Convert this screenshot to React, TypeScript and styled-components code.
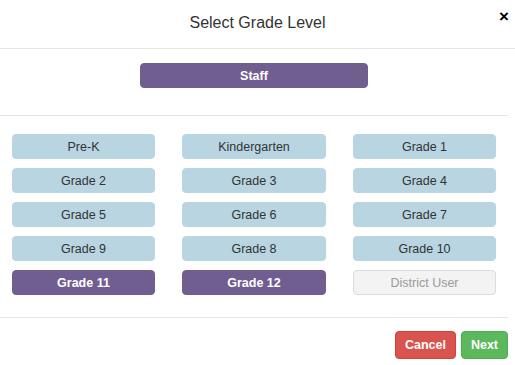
import React from "react";
import styled, { createGlobalStyle } from "styled-components";

const Global = createGlobalStyle`
  html, body { margin: 0; padding: 0; background: #fff; }
  body { font-family: "Liberation Sans", Arial, sans-serif; color: #333; }
  * { box-sizing: border-box; }
`;

const Modal = styled.div`
  width: 515px;
  height: 365px;
  background: #fff;
  display: flex;
  flex-direction: column;
`;

const Header = styled.div`
  position: relative;
  height: 49px;
  border-bottom: 1px solid #e5e5e5;
  display: flex;
  align-items: center;
  justify-content: center;
  padding-bottom: 3px;
`;

const Title = styled.h4`
  margin: 0;
  font-size: 16px;
  font-weight: normal;
  line-height: 18px;
  color: #333;
`;

const Close = styled.button`
  position: absolute;
  top: 8px;
  right: 6px;
  border: 0;
  background: none;
  padding: 0;
  font-family: "Liberation Sans", Arial, sans-serif;
  font-size: 17px;
  font-weight: bold;
  line-height: 17px;
  color: #000;
  cursor: pointer;
`;

const StaffSection = styled.div`
  height: 67px;
  border-bottom: 1px solid #e5e5e5;
  margin-right: 7px;
  display: flex;
  justify-content: center;
  padding: 14px 0 0 0;
`;

const Grid = styled.div`
  display: grid;
  grid-template-columns: 143px 144px 143px;
  grid-auto-rows: 25px;
  align-content: start;
  column-gap: 27px;
  row-gap: 9px;
  padding: 18px 0 0 12px;
  height: 202px;
  border-bottom: 1px solid #e5e5e5;
  margin-right: 7px;
`;

type Variant = "default" | "selected" | "disabled";

const GradeButton = styled.button<{ $variant: Variant; $wide?: boolean }>`
  width: ${(p) => (p.$wide ? "228px" : "auto")};
  height: 25px;
  border-radius: 4px;
  font-family: "Liberation Sans", Arial, sans-serif;
  font-size: 12.5px;
  padding: 0;
  cursor: pointer;
  border: 1px solid
    ${(p) =>
      p.$variant === "selected"
        ? "#715e91"
        : p.$variant === "disabled"
        ? "#dcdcdc"
        : "#b8d5e1"};
  background: ${(p) =>
    p.$variant === "selected"
      ? "#715e91"
      : p.$variant === "disabled"
      ? "#f3f3f3"
      : "#b8d5e1"};
  color: ${(p) =>
    p.$variant === "selected"
      ? "#fff"
      : p.$variant === "disabled"
      ? "#9a9a9a"
      : "#333"};
  font-weight: ${(p) => (p.$variant === "selected" ? "bold" : "normal")};
`;

const Footer = styled.div`
  flex: 1;
  display: flex;
  justify-content: flex-end;
  align-items: flex-start;
  gap: 5px;
  padding: 13px 7px 0 0;
`;

const ActionButton = styled.button<{ $tone: "danger" | "success" }>`
  height: 28px;
  padding: 0 9px;
  border-radius: 4px;
  font-family: "Liberation Sans", Arial, sans-serif;
  font-size: 12.5px;
  font-weight: bold;
  color: #fff;
  cursor: pointer;
  background: ${(p) => (p.$tone === "danger" ? "#d9534f" : "#5cb85c")};
  border: 1px solid ${(p) => (p.$tone === "danger" ? "#d43f3a" : "#4cae4c")};
`;

const grades: { label: string; variant: Variant }[] = [
  { label: "Pre-K", variant: "default" },
  { label: "Kindergarten", variant: "default" },
  { label: "Grade 1", variant: "default" },
  { label: "Grade 2", variant: "default" },
  { label: "Grade 3", variant: "default" },
  { label: "Grade 4", variant: "default" },
  { label: "Grade 5", variant: "default" },
  { label: "Grade 6", variant: "default" },
  { label: "Grade 7", variant: "default" },
  { label: "Grade 9", variant: "default" },
  { label: "Grade 8", variant: "default" },
  { label: "Grade 10", variant: "default" },
  { label: "Grade 11", variant: "selected" },
  { label: "Grade 12", variant: "selected" },
  { label: "District User", variant: "disabled" },
];

export default function App() {
  return (
    <>
      <Global />
      <Modal>
        <Header>
          <Title>Select Grade Level</Title>
          <Close aria-label="Close">×</Close>
        </Header>
        <StaffSection>
          <GradeButton $variant="selected" $wide>
            Staff
          </GradeButton>
        </StaffSection>
        <Grid>
          {grades.map((g) => (
            <GradeButton key={g.label} $variant={g.variant}>
              {g.label}
            </GradeButton>
          ))}
        </Grid>
        <Footer>
          <ActionButton $tone="danger">Cancel</ActionButton>
          <ActionButton $tone="success">Next</ActionButton>
        </Footer>
      </Modal>
    </>
  );
}
